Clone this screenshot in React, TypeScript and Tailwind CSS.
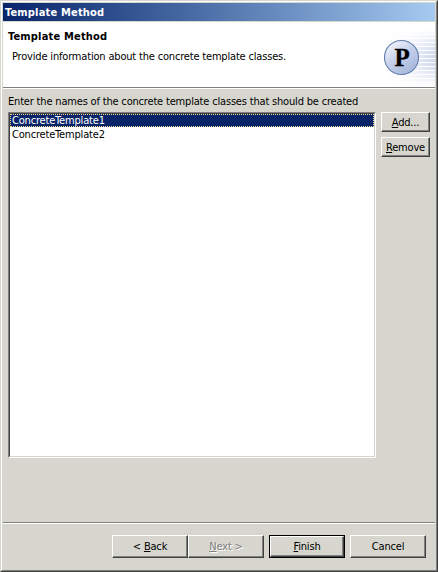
import type { ReactNode } from "react";

const raised =
  "border border-t-white border-l-white border-r-[#404040] border-b-[#404040] shadow-[inset_-1px_-1px_0_#808080]";

function Button({ className = "", children }: { className?: string; children: ReactNode }) {
  return (
    <button className={`flex shrink-0 items-center justify-center bg-[#d6d6ce] leading-[13px] whitespace-nowrap ${className}`}>
      {children}
    </button>
  );
}

function Key({ children }: { children: ReactNode }) {
  return <span className="underline decoration-1 underline-offset-[1px]">{children}</span>;
}

function PatternLogo() {
  return (
    <svg className="block" width="65" height="65" viewBox="370 22 65 65">
      <defs>
        <linearGradient id="stripe" gradientUnits="userSpaceOnUse" x1="388" x2="435" y1="0" y2="0">
          <stop offset="0" stopColor="#fff" />
          <stop offset="0.5" stopColor="#edf0fa" />
          <stop offset="1" stopColor="#cdd7ec" />
        </linearGradient>
        <linearGradient id="fade" x1="0" x2="0" y1="0" y2="1">
          <stop offset="0" stopColor="#fff" stopOpacity="0.95" />
          <stop offset="0.4" stopColor="#fff" stopOpacity="0" />
          <stop offset="0.6" stopColor="#fff" stopOpacity="0" />
          <stop offset="1" stopColor="#fff" stopOpacity="0.95" />
        </linearGradient>
        <linearGradient id="disc" x1="0.15" x2="0.75" y1="0.1" y2="0.9">
          <stop offset="0" stopColor="#f0f3fb" />
          <stop offset="0.5" stopColor="#c5cfe9" />
          <stop offset="1" stopColor="#a9b9dd" />
        </linearGradient>
      </defs>
      {[31, 35, 39, 43, 47, 51, 55, 59, 63, 67, 71, 75, 79, 83].map((y) => (
        <rect key={y} x="388" y={y} width="47" height="3" fill="url(#stripe)" />
      ))}
      <rect x="388" y="30" width="47" height="57" fill="url(#fade)" />
      <circle cx="401.5" cy="57.5" r="17" fill="url(#disc)" stroke="#637dad" strokeWidth="1.1" />
      <text x="402" y="65.5" textAnchor="middle" fontFamily="'Liberation Serif', serif" fontWeight="bold" fontSize="25" stroke="#000" strokeWidth="0.3">
        P
      </text>
    </svg>
  );
}

export default function App() {
  return (
    <div className="h-[572px] w-[438px] border-t border-l border-r border-b border-t-[#d6d6ce] border-l-[#d6d6ce] border-r-[#404040] border-b-[#404040] bg-[#d6d6ce] font-['DejaVu_Sans_Condensed','DejaVu_Sans',sans-serif] text-[11px] leading-[13px] tracking-[-0.18px] text-black [font-stretch:condensed]">
      <div className="flex h-[570px] flex-col border border-t-white border-l-white border-r-[#808080] border-b-[#808080] pt-px pr-px pl-px">
        <div className="flex h-[18px] shrink-0 items-center bg-linear-to-r from-[#0a246a] to-[#a6caf0] pl-[2px] font-bold tracking-[0.18px] text-white">
          Template Method
        </div>
        <div className="mt-px flex h-[65px] shrink-0 justify-between bg-white">
          <div className="pt-[8px] pl-[5px] whitespace-nowrap">
            <div className="font-bold tracking-[0.18px]">Template Method</div>
            <div className="mt-[7px] pl-[4px]">Provide information about the concrete template classes.</div>
          </div>
          <PatternLogo />
        </div>
        <div className="h-[2px] shrink-0 border-t border-b border-t-[#808080] border-b-white" />
        <div className="flex h-[433px] shrink-0 flex-col pt-[6px] pl-[5px]">
          <div className="h-[17px] whitespace-nowrap">
            Enter the names of the concrete template classes that should be created
          </div>
          <div className="flex gap-[5px]">
            <div className="h-[346px] w-[368px] border border-t-[#808080] border-l-[#808080] border-r-white border-b-white">
              <div className="h-full border border-t-[#404040] border-l-[#404040] border-r-[#d6d6ce] border-b-[#d6d6ce] bg-white">
                <div className="flex h-[13px] items-center border border-dotted border-[#f5db95] bg-[#0a246a] pl-px text-white">
                  ConcreteTemplate1
                </div>
                <div className="h-[13px] pt-px pl-[2px]">ConcreteTemplate2</div>
              </div>
            </div>
            <div className="flex flex-col gap-[5px]">
              <Button className={`h-5 w-[49px] ${raised}`}><span><Key>A</Key>dd...</span></Button>
              <Button className={`h-5 w-[49px] ${raised}`}><span><Key>R</Key>emove</span></Button>
            </div>
          </div>
        </div>
        <div className="h-[2px] shrink-0 border-t border-b border-t-[#808080] border-b-white" />
        <div className="flex pt-[11px] pl-[109px]">
          <Button className={`h-[23px] w-[76px] ${raised}`}><span>&lt; <Key>B</Key>ack</span></Button>
          <Button className={`h-[23px] w-[76px] text-[#808080] [text-shadow:1px_1px_0_white] ${raised}`}><span><Key>N</Key>ext &gt;</span></Button>
          <div className="ml-[5px] border border-black">
            <Button className={`h-[21px] w-[74px] ${raised}`}><span><Key>F</Key>inish</span></Button>
          </div>
          <Button className={`ml-[5px] h-[23px] w-[76px] ${raised}`}>Cancel</Button>
        </div>
      </div>
    </div>
  );
}
